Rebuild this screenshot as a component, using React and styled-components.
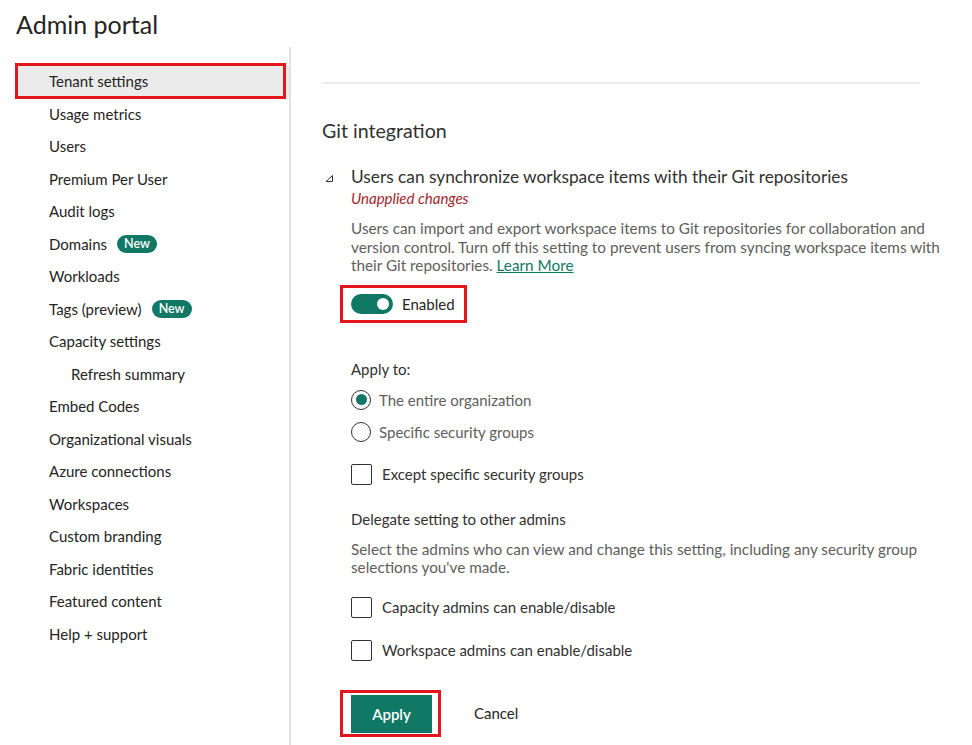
import React from "react";
import styled, { createGlobalStyle } from "styled-components";

const teal = "#117865";
const red = "#e3161e";

const Global = createGlobalStyle`
  html, body { margin: 0; padding: 0; background: #fff; }
  body { font-family: "Segoe UI", Lato, "Open Sans", sans-serif; color: #323130; }
  * { box-sizing: border-box; }
`;

const Page = styled.div`
  width: 972px;
  height: 745px;
  overflow: hidden;
  display: flex;
  flex-direction: column;
`;

const Header = styled.h1`
  margin: 0;
  height: 47px;
  padding: 8px 0 0 16px;
  font-size: 25px;
  font-weight: 400;
  line-height: 32px;
  color: #252423;
`;

const Body = styled.div`
  flex: 1;
  display: flex;
`;

const Sidebar = styled.nav`
  width: 275px;
  margin-left: 16px;
  padding-top: 18px;
  border-right: 2px solid #e3e3e3;
  display: flex;
  flex-direction: column;
`;

const NavItem = styled.div`
  position: relative;
  height: 32.5px;
  display: flex;
  align-items: center;
  gap: 10px;
  padding-left: ${(p) => (p.$indent ? 55 : 33)}px;
  font-size: 15px;
  color: #252423;
  background: ${(p) => (p.$selected ? "#ebebeb" : "transparent")};
  ${(p) =>
    p.$selected &&
    `
    &::after {
      content: "";
      position: absolute;
      left: -1px;
      top: -2px;
      right: 3px;
      bottom: -1px;
      border: 3px solid ${red};
    }
  `}
`;

const Badge = styled.span`
  background: ${teal};
  color: #fff;
  font-size: 12.5px;
  font-weight: 600;
  line-height: 18px;
  padding: 0 7px;
  border-radius: 10px;
`;

const Main = styled.main`
  flex: 1;
  padding: 35px 0 0 31px;
  display: flex;
  flex-direction: column;
`;

const Rule = styled.div`
  height: 2px;
  background: #ebebeb;
  margin-right: 52px;
`;

const SectionTitle = styled.h2`
  margin: 34px 0 0;
  font-size: 19.6px;
  font-weight: 400;
  line-height: 26px;
  color: #323130;
`;

const Setting = styled.div`
  margin-top: 22px;
  display: flex;
`;

const Expander = styled.div`
  width: 29px;
  display: flex;
  align-items: flex-start;
  padding: 8px 0 0 3px;
`;

const SettingBody = styled.div`
  flex: 1;
  display: flex;
  flex-direction: column;
  align-items: flex-start;
`;

const SettingTitle = styled.div`
  font-size: 17.3px;
  line-height: 22px;
  color: #323130;
`;

const Unapplied = styled.div`
  font-size: 15px;
  line-height: 20px;
  font-style: italic;
  color: #a4262c;
`;

const Desc = styled.p`
  margin: ${(p) => p.$mt}px 0 0;
  font-size: 15.3px;
  line-height: 18.5px;
  color: #605e5c;
  max-width: 600px;
`;

const Link = styled.a`
  color: ${teal};
  text-decoration: underline;
`;

const Annotated = styled.div`
  border: 3px solid ${red};
  padding: ${(p) => p.$pad};
  margin: ${(p) => p.$margin};
  display: flex;
  align-items: center;
`;

const Toggle = styled.span`
  width: 42px;
  height: 20px;
  border-radius: 10px;
  background: ${teal};
  display: flex;
  align-items: center;
  justify-content: flex-end;
  padding-right: 4px;
  &::after {
    content: "";
    width: 12px;
    height: 12px;
    border-radius: 50%;
    background: #fff;
  }
`;

const ToggleLabel = styled.span`
  margin-left: 9px;
  font-size: 15px;
  color: #252423;
`;

const Label = styled.div`
  margin-top: ${(p) => p.$mt}px;
  font-size: 15px;
  line-height: 20px;
  color: #323130;
`;

const Option = styled.div`
  margin-top: ${(p) => p.$mt}px;
  display: flex;
  align-items: center;
  gap: ${(p) => (p.$box ? 10 : 8)}px;
  font-size: 15px;
  line-height: 20px;
  color: ${(p) => (p.$box ? "#323130" : "#605e5c")};
`;

const Radio = styled.span`
  width: 20px;
  height: 20px;
  border-radius: 50%;
  border: 1px solid #323130;
  display: flex;
  align-items: center;
  justify-content: center;
  &::after {
    content: "";
    width: 11px;
    height: 11px;
    border-radius: 50%;
    background: ${(p) => (p.$checked ? teal : "transparent")};
  }
`;

const Box = styled.span`
  width: 21px;
  height: 21px;
  border: 1px solid #323130;
  border-radius: 2px;
`;

const Actions = styled.div`
  margin: 29px 0 0 -11px;
  display: flex;
  align-items: center;
  gap: 33px;
`;

const PrimaryButton = styled.button`
  width: 81px;
  height: 38px;
  border: none;
  background: ${teal};
  color: #fff;
  font-family: inherit;
  font-size: 15px;
  font-weight: 600;
`;

const TextButton = styled.button`
  border: none;
  background: none;
  padding: 0;
  font-family: inherit;
  font-size: 15px;
  color: #252423;
`;

const navItems = [
  { label: "Tenant settings", selected: true },
  { label: "Usage metrics" },
  { label: "Users" },
  { label: "Premium Per User" },
  { label: "Audit logs" },
  { label: "Domains", badge: true },
  { label: "Workloads" },
  { label: "Tags (preview)", badge: true },
  { label: "Capacity settings" },
  { label: "Refresh summary", indent: true },
  { label: "Embed Codes" },
  { label: "Organizational visuals" },
  { label: "Azure connections" },
  { label: "Workspaces" },
  { label: "Custom branding" },
  { label: "Fabric identities" },
  { label: "Featured content" },
  { label: "Help + support" },
];

export default function App() {
  return (
    <Page>
      <Global />
      <Header>Admin portal</Header>
      <Body>
        <Sidebar>
          {navItems.map((n) => (
            <NavItem key={n.label} $selected={n.selected} $indent={n.indent}>
              {n.label}
              {n.badge && <Badge>New</Badge>}
            </NavItem>
          ))}
        </Sidebar>
        <Main>
          <Rule />
          <SectionTitle>Git integration</SectionTitle>
          <Setting>
            <Expander>
              <svg width="9" height="9" viewBox="0 0 9 9">
                <path d="M7.5 1.5 L7.5 7.5 L1 7.5 Z" fill="none" stroke="#323130" strokeWidth="1" />
              </svg>
            </Expander>
            <SettingBody>
              <SettingTitle>Users can synchronize workspace items with their Git repositories</SettingTitle>
              <Unapplied>Unapplied changes</Unapplied>
              <Desc $mt={11}>
                Users can import and export workspace items to Git repositories for collaboration and version
                control. Turn off this setting to prevent users from syncing workspace items with their Git
                repositories. <Link href="#">Learn More</Link>
              </Desc>
              <Annotated $pad="6px 9px 6px 8px" $margin="10px 0 0 -11px">
                <Toggle />
                <ToggleLabel>Enabled</ToggleLabel>
              </Annotated>
              <Label $mt={36}>Apply to:</Label>
              <Option $mt={11}>
                <Radio $checked />
                The entire organization
              </Option>
              <Option $mt={12}>
                <Radio />
                Specific security groups
              </Option>
              <Option $mt={22} $box>
                <Box />
                Except specific security groups
              </Option>
              <Label $mt={24}>Delegate setting to other admins</Label>
              <Desc $mt={11}>
                Select the admins who can view and change this setting, including any security group selections
                you've made.
              </Desc>
              <Option $mt={20} $box>
                <Box />
                Capacity admins can enable/disable
              </Option>
              <Option $mt={22} $box>
                <Box />
                Workspace admins can enable/disable
              </Option>
              <Actions>
                <Annotated $pad="2px 6px 1px 8px" $margin="0">
                  <PrimaryButton>Apply</PrimaryButton>
                </Annotated>
                <TextButton>Cancel</TextButton>
              </Actions>
            </SettingBody>
          </Setting>
        </Main>
      </Body>
    </Page>
  );
}
